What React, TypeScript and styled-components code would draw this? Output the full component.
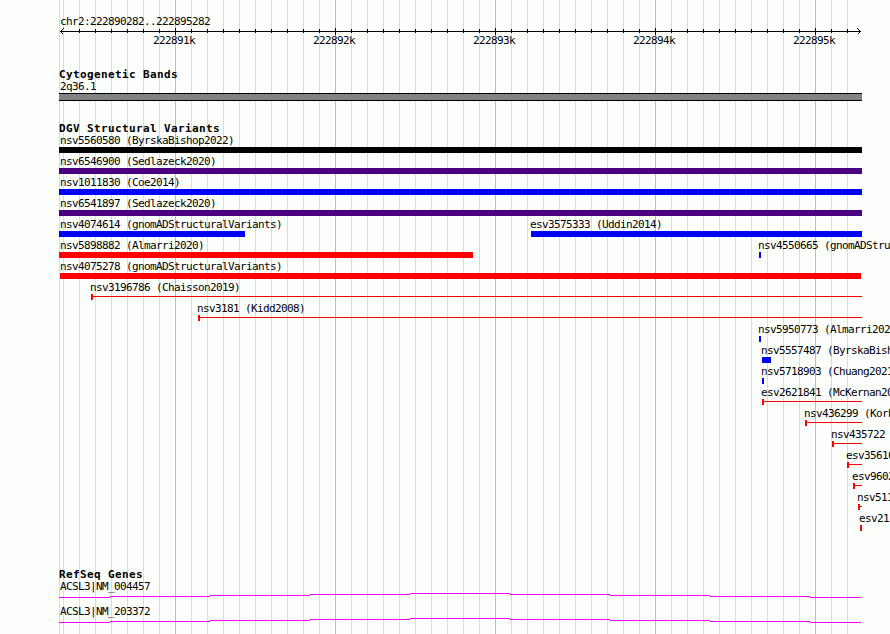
import React from "react";
import styled, { createGlobalStyle } from "styled-components";

const VIEW_START = 59;

const GlobalStyle = createGlobalStyle`
  body {
    margin: 0;
    background-color: #fdfffc;
    overflow: hidden;
  }
`;

const Browser = styled.main`
  width: 890px;
  height: 634px;
  overflow: hidden;
  box-sizing: border-box;
  padding: 15px 0 0 ${VIEW_START}px;
  display: flex;
  flex-direction: column;
  color: #000000;
  font-family: "DejaVu Sans Mono", monospace;
  background-color: #fdfffc;
  background-image: linear-gradient(#afeeee, #afeeee),
    repeating-linear-gradient(
      to right,
      transparent 0px 116px,
      #87ceeb 116px 117px,
      transparent 117px 160px
    ),
    repeating-linear-gradient(
      to right,
      transparent 0px 4px,
      #afeeee 4px 5px,
      transparent 5px 16px
    );
  background-position: ${VIEW_START}px 0;
  background-size: 1px 100%, 803px 100%, 803px 100%;
  background-repeat: no-repeat;
`;

const Label = styled.span<{ $indent?: number }>`
  display: block;
  height: 12px;
  margin-left: ${({ $indent = 1 }) => $indent}px;
  font-size: 11px;
  line-height: 14px;
  letter-spacing: -0.622px;
  white-space: pre;
`;

const Title = styled.h2`
  height: 12px;
  margin: 0;
  font-size: 11px;
  font-weight: bold;
  line-height: 14px;
  letter-spacing: 0.378px;
  white-space: pre;
`;

const Scale = styled.header`
  flex: none;
  height: 53px;
`;

const Ruler = styled.svg`
  display: block;
  width: 803px;
  height: 7px;
  margin-top: 1px;
`;

const ScaleNumbers = styled.div`
  display: flex;
  width: 800px;
  padding-left: 35px;
`;

const ScaleNumber = styled(Label)`
  width: 160px;
  margin-left: 0;
  line-height: 12px;
  text-align: center;
`;

const Track = styled.section<{ $height: number }>`
  flex: none;
  height: ${({ $height }) => $height}px;
`;

const Band = styled.div`
  width: 803px;
  height: 8px;
  box-sizing: border-box;
  margin-top: 1px;
  border: solid #000000;
  border-width: 1px 0;
  background-color: #848284;
`;

const Row = styled.div`
  display: flex;
  height: 21px;
`;

const FeatureBox = styled.div<{ $width: number; $offset: number }>`
  flex: none;
  width: ${({ $width }) => $width}px;
  margin-left: ${({ $offset }) => $offset}px;
`;

const Bar = styled.div<{ $color: string }>`
  height: 6px;
  margin-top: 1px;
  background-color: ${({ $color }) => $color};
`;

// A start tick with a thin line running to the end of the feature.
const Span = styled.div<{ $color: string }>`
  height: 6px;
  margin-top: 1px;
  background: linear-gradient(
        ${({ $color }) => $color},
        ${({ $color }) => $color}
      )
      0 0 / 2px 6px no-repeat,
    linear-gradient(${({ $color }) => $color}, ${({ $color }) => $color}) 0
      2px / 100% 1px no-repeat;
`;

const Gene = styled.div`
  height: 25px;
`;

const GeneLine = styled.svg`
  display: block;
  width: 803px;
  height: 5px;
  margin-top: 1px;
`;

interface Variant {
  name: string;
  start: number;
  end: number;
  color: string;
  line?: boolean;
}

const BLACK = "#000000";
const INDIGO = "#4b0082";
const BLUE = "#0000ff";
const RED = "#ff0000";

const rows: Variant[][] = [
  [{ name: "nsv5560580 (ByrskaBishop2022)", start: 59, end: 862, color: BLACK }],
  [{ name: "nsv6546900 (Sedlazeck2020)", start: 59, end: 862, color: INDIGO }],
  [{ name: "nsv1011830 (Coe2014)", start: 59, end: 862, color: BLUE }],
  [{ name: "nsv6541897 (Sedlazeck2020)", start: 59, end: 862, color: INDIGO }],
  [
    { name: "nsv4074614 (gnomADStructuralVariants)", start: 59, end: 245, color: BLUE },
    { name: "esv3575333 (Uddin2014)", start: 531, end: 862, color: BLUE },
  ],
  [
    { name: "nsv5898882 (Almarri2020)", start: 59, end: 473, color: RED },
    { name: "nsv4550665 (gnomADStru", start: 759, end: 761, color: BLUE },
  ],
  [{ name: "nsv4075278 (gnomADStructuralVariants)", start: 60, end: 861, color: RED }],
  [{ name: "nsv3196786 (Chaisson2019)", start: 91, end: 862, color: RED, line: true }],
  [{ name: "nsv3181 (Kidd2008)", start: 198, end: 862, color: RED, line: true }],
  [{ name: "nsv5950773 (Almarri202", start: 759, end: 761, color: BLUE }],
  [{ name: "nsv5557487 (ByrskaBish", start: 762, end: 771, color: BLUE }],
  [{ name: "nsv5718903 (Chuang2021", start: 762, end: 764, color: BLUE }],
  [{ name: "esv2621841 (McKernan20", start: 762, end: 862, color: RED, line: true }],
  [{ name: "nsv436299 (Korb", start: 805, end: 862, color: RED, line: true }],
  [{ name: "nsv435722 ", start: 832, end: 862, color: RED, line: true }],
  [{ name: "esv35610", start: 847, end: 862, color: RED, line: true }],
  [{ name: "esv9602", start: 853, end: 862, color: RED, line: true }],
  [{ name: "nsv511", start: 858, end: 862, color: RED, line: true }],
  [{ name: "esv21", start: 860, end: 862, color: RED }],
];

const genes = ["ACSL3|NM_004457", "ACSL3|NM_203372"];
const scaleNumbers = ["222891k", "222892k", "222893k", "222894k", "222895k"];
const minorTicks = Array.from({ length: 49 }, (_, i) => 20 + i * 16);
const majorTicks = [116, 276, 436, 596, 756];

const labelIndent = (start: number) => {
  if (start === VIEW_START) return 1;
  return start === VIEW_START + 1 ? 0 : -1;
};

const VariantRow: React.FC<{ variants: Variant[] }> = ({ variants }) => (
  <Row>
    {variants.map((v, i) => {
      const previous = i > 0 ? variants[i - 1].end : VIEW_START;
      const Glyph = v.line ? Span : Bar;
      return (
        <FeatureBox
          key={v.name}
          $width={v.end - v.start}
          $offset={v.start - previous}
        >
          <Label $indent={labelIndent(v.start)}>{v.name}</Label>
          <Glyph $color={v.color} />
        </FeatureBox>
      );
    })}
  </Row>
);

const App: React.FC = () => {
  return (
    <>
      <GlobalStyle />
      <Browser>
        <Scale>
          <Label>chr2:222890282..222895282</Label>
          <Ruler viewBox="0 0 803 7" shapeRendering="crispEdges">
            <rect x="1" y="3" width="801" height="1" />
            {minorTicks.map((x) => (
              <rect key={x} x={x} y="1" width="1" height="4" />
            ))}
            {majorTicks.map((x) => (
              <rect key={x} x={x} y="0" width="1" height="7" />
            ))}
            <path
              d="M4.5 0.5 L1.5 3.5 L4.5 6.5 M798.5 0.5 L801.5 3.5 L798.5 6.5"
              fill="none"
              stroke="#000000"
            />
          </Ruler>
          <ScaleNumbers>
            {scaleNumbers.map((n) => (
              <ScaleNumber key={n}>{n}</ScaleNumber>
            ))}
          </ScaleNumbers>
        </Scale>

        <Track $height={54}>
          <Title>Cytogenetic Bands</Title>
          <Label>2q36.1</Label>
          <Band />
        </Track>

        <Track $height={446}>
          <Title>DGV Structural Variants</Title>
          {rows.map((variants) => (
            <VariantRow key={variants[0].name} variants={variants} />
          ))}
        </Track>

        <Track $height={66}>
          <Title>RefSeq Genes</Title>
          {genes.map((name) => (
            <Gene key={name}>
              <Label>{name}</Label>
              <GeneLine viewBox="0 0 803 5" shapeRendering="crispEdges">
                <path
                  d="M0 4.5H51M51 3.5H151M151 2.5H251M251 1.5H351M351 0.5H451M451 1.5H551M551 2.5H651M651 3.5H751M751 4.5H802"
                  fill="none"
                  stroke="#ff00ff"
                />
              </GeneLine>
            </Gene>
          ))}
        </Track>
      </Browser>
    </>
  );
};

export default App;
